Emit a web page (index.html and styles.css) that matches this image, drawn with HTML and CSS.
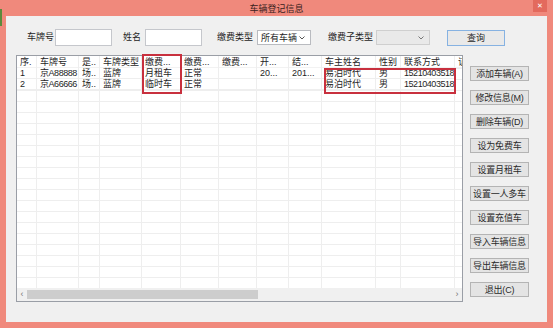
FILE: index.html
```html
<!DOCTYPE html>
<html>
<head>
<meta charset="utf-8">
<link rel="stylesheet" href="styles.css">
</head>
<body>
<div class="window">
  <div class="sliver"></div>
  <div class="titlebar">
    <span class="title">车辆登记信息</span>
    <span class="close">✕</span>
  </div>
  <div class="client">
    <div class="search">
      <span class="lbl l1">车牌号</span>
      <span class="input in1"></span>
      <span class="lbl l2">姓名</span>
      <span class="input in2"></span>
      <span class="lbl l3">缴费类型</span>
      <span class="select s1"><span class="val">所有车辆</span><svg class="chev" width="6" height="4" viewBox="0 0 6 4"><path d="M0.5 0.5 L3 3 L5.5 0.5" fill="none" stroke="#555" stroke-width="1"/></svg></span>
      <span class="lbl l4">缴费子类型</span>
      <span class="select s2 disabled"><span class="val"></span><svg class="chev" width="6" height="4" viewBox="0 0 6 4"><path d="M0.5 0.5 L3 3 L5.5 0.5" fill="none" stroke="#777" stroke-width="1"/></svg></span>
      <span class="btn query">查询</span>
    </div>
    <div class="main">
      <div class="table">
        <div class="grid">
          <div class="col c1"><div class="h">序.</div><div class="c">1</div><div class="c">2</div></div>
          <div class="col c2"><div class="h">车牌号</div><div class="c num">京A88888</div><div class="c num">京A66666</div></div>
          <div class="col c3"><div class="h">是..</div><div class="c">场..</div><div class="c">场..</div></div>
          <div class="col c4"><div class="h">车牌类型</div><div class="c">蓝牌</div><div class="c">蓝牌</div></div>
          <div class="col c5"><div class="h">缴费...</div><div class="c">月租车</div><div class="c">临时车</div></div>
          <div class="col c6"><div class="h">缴费...</div><div class="c">正常</div><div class="c">正常</div></div>
          <div class="col c7"><div class="h">缴费...</div><div class="c"></div><div class="c"></div></div>
          <div class="col c8"><div class="h">开...</div><div class="c">20...</div><div class="c"></div></div>
          <div class="col c9"><div class="h">结...</div><div class="c">201...</div><div class="c"></div></div>
          <div class="col c10"><div class="h">车主姓名</div><div class="c">易泊时代</div><div class="c">易泊时代</div></div>
          <div class="col c11"><div class="h">性别</div><div class="c">男</div><div class="c">男</div></div>
          <div class="col c12"><div class="h">联系方式</div><div class="c num">15210403518</div><div class="c num">15210403518</div></div>
          <div class="col c13"><div class="h">证</div></div>
        </div>
        <div class="hscroll">
          <span class="arrow">‹</span>
          <div class="track"><div class="thumb"></div></div>
          <span class="arrow">›</span>
        </div>
        <div class="mark m1"></div>
        <div class="mark m2"></div>
      </div>
      <div class="actions">
        <span class="btn">添加车辆(A)</span>
        <span class="btn">修改信息(M)</span>
        <span class="btn">删除车辆(D)</span>
        <span class="btn">设为免费车</span>
        <span class="btn">设置月租车</span>
        <span class="btn">设置一人多车</span>
        <span class="btn">设置充值车</span>
        <span class="btn">导入车辆信息</span>
        <span class="btn">导出车辆信息</span>
        <span class="btn">退出(C)</span>
      </div>
    </div>
  </div>
</div>
</body>
</html>
```

FILE: styles.css
```css
* { box-sizing: border-box; }
html, body { margin: 0; padding: 0; }
body {
  width: 553px;
  height: 328px;
  overflow: hidden;
  font-family: "Liberation Sans", "Noto Sans CJK SC", sans-serif;
  font-size: 9px;
  color: #1e1e1e;
}
.window {
  position: relative;
  width: 553px;
  height: 328px;
  background: #f0897c;
  padding: 0 6px 6px 6px;
  display: flex;
  flex-direction: column;
}
.sliver {
  position: absolute;
  left: 0;
  top: 9px;
  width: 2px;
  height: 17px;
  background: #5c8a3c;
}
.titlebar {
  position: relative;
  height: 16px;
  display: flex;
  align-items: center;
  justify-content: center;
}
.title {
  color: #3a2220;
  font-size: 9px;
  line-height: 16px;
  margin-top: 1px;
}
.close {
  position: absolute;
  right: 0;
  top: 0;
  width: 14px;
  height: 12px;
  background: #e36a5d;
  color: #fff;
  font-size: 7px;
  line-height: 12px;
  text-align: center;
}
.client {
  flex: 1;
  background: #f0f0f0;
  padding: 13px 0 0 10px;
  display: flex;
  flex-direction: column;
}
.search {
  display: flex;
  align-items: center;
  height: 17px;
  padding-left: 11px;
}
.lbl { white-space: nowrap; line-height: 17px; }
.input {
  display: block;
  height: 17px;
  background: #fff;
  border: 1px solid #c5c7cc;
}
.in1 { width: 57px; margin-left: 1px; }
.l2 { margin-left: 11px; }
.in2 { width: 57px; margin-left: 4px; }
.l3 { margin-left: 15px; }
.select {
  display: flex;
  align-items: center;
  justify-content: space-between;
  height: 15px;
  background: #fff;
  border: 1px solid #b9bbc0;
  padding: 0 5px 0 3px;
}
.select .chev { margin-top: 1px; }
.s1 { width: 54px; margin-left: 4px; }
.l4 { margin-left: 17px; }
.s2 { width: 54px; margin-left: 3px; }
.select.disabled { background: #e9e9e9; border-color: #cfcfcf; }
.btn {
  display: flex;
  align-items: center;
  justify-content: center;
  height: 15px;
  background: #e4e4e4;
  border: 1px solid #b4b4b4;
  color: #2a2a2a;
  white-space: nowrap;
  font-size: 9px;
}
.query {
  width: 58px;
  height: 16px;
  margin-left: 17px;
  border-color: #86b2e2;
  background: #e9e9e9;
}
.main {
  display: flex;
  margin-top: 9px;
  gap: 7px;
}
.table {
  position: relative;
  width: 447px;
  height: 247px;
  border: 1px solid #9a9ea6;
  background: #fff;
  display: flex;
  flex-direction: column;
}
.grid {
  flex: 1;
  display: flex;
  overflow: hidden;
  background-image: linear-gradient(to bottom, transparent 0, transparent 10px, #eeeeee 10px, #eeeeee 11px);
  background-size: 100% 11px;
  background-position: 0 2px;
}
.col {
  flex: none;
  border-right: 1px solid #eeeeee;
  overflow: hidden;
  white-space: nowrap;
}
.col .h, .col .c {
  padding-left: 3px;
  background: #fff;
}
.col .h { height: 12px; line-height: 12px; border-bottom: 1px solid #f2f2f2; }
.col .c { height: 11px; line-height: 11px; border-bottom: 1px solid #eeeeee; }
.col .num { letter-spacing: -0.45px; }
.c1 { width: 20px; }
.c2 { width: 42px; }
.c3 { width: 21px; }
.c4 { width: 42px; }
.c5 { width: 39px; }
.c6 { width: 38px; }
.c7 { width: 38px; }
.c8 { width: 32px; }
.c9 { width: 33px; }
.c10 { width: 54px; }
.c11 { width: 25px; }
.c12 { width: 54px; }
.c13 { flex: 1; border-right: none; }
.hscroll {
  height: 13px;
  display: flex;
  align-items: center;
  background: #f0f0f0;
}
.arrow {
  width: 10px;
  text-align: center;
  color: #777;
  font-size: 9px;
  line-height: 13px;
}
.track {
  flex: 1;
  height: 13px;
  display: flex;
  align-items: center;
}
.thumb {
  width: 231px;
  height: 9px;
  background: #cdcdcd;
}
.mark {
  position: absolute;
  border: 2px solid #c8303e;
}
.m1 { left: 125px; top: -2px; width: 40px; height: 40px; }
.m2 { left: 307px; top: 12px; width: 132px; height: 26px; }
.actions {
  width: 59px;
  padding-top: 11px;
  display: flex;
  flex-direction: column;
  gap: 9px;
}
.actions .btn { letter-spacing: -0.2px; }
```
